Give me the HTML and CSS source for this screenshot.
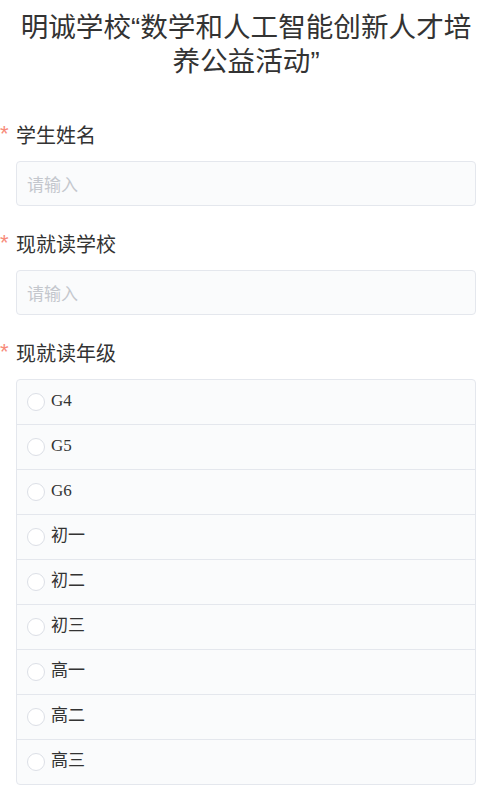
FILE: index.html
```html
<!DOCTYPE html>
<html lang="zh-CN">
<head>
<meta charset="utf-8">
<title>明诚学校</title>
<link rel="stylesheet" href="styles.css">
</head>
<body>
<div class="page">
  <h1 class="title">明诚学校“数学和人工智能创新人才培养公益活动”</h1>
  <form class="form">
    <div class="field">
      <label class="label"><span class="req">*</span>学生姓名</label>
      <input class="input" type="text" placeholder="请输入">
    </div>
    <div class="field">
      <label class="label"><span class="req">*</span>现就读学校</label>
      <input class="input" type="text" placeholder="请输入">
    </div>
    <div class="field">
      <label class="label"><span class="req">*</span>现就读年级</label>
      <div class="radio-group">
        <label class="option"><span class="circle"></span><span class="opt-text">G4</span></label>
        <label class="option"><span class="circle"></span><span class="opt-text">G5</span></label>
        <label class="option"><span class="circle"></span><span class="opt-text">G6</span></label>
        <label class="option"><span class="circle"></span><span class="opt-text">初一</span></label>
        <label class="option"><span class="circle"></span><span class="opt-text">初二</span></label>
        <label class="option"><span class="circle"></span><span class="opt-text">初三</span></label>
        <label class="option"><span class="circle"></span><span class="opt-text">高一</span></label>
        <label class="option"><span class="circle"></span><span class="opt-text">高二</span></label>
        <label class="option"><span class="circle"></span><span class="opt-text">高三</span></label>
      </div>
    </div>
  </form>
</div>
</body>
</html>
```
FILE: styles.css
```css
* { box-sizing: border-box; }
html, body {
  margin: 0;
  padding: 0;
  background: #fff;
}
body {
  font-family: "Noto Sans CJK SC", "Noto Sans", sans-serif;
  color: #333;
}
.page {
  padding: 11px 15px 0 16px;
}
.title {
  margin: 0;
  font-family: "Liberation Sans", "Noto Sans CJK SC", sans-serif;
  font-size: 27.6px;
  line-height: 34px;
  font-weight: 400;
  text-align: center;
  color: #333;
}
.form {
  margin-top: 42px;
}
.field {
  margin-bottom: 24px;
}
.label {
  display: block;
  position: relative;
  font-size: 20px;
  line-height: 28px;
  height: 28px;
  margin-bottom: 12px;
  color: #333;
}
.req {
  position: absolute;
  left: -16px;
  top: 2px;
  color: #f78b7b;
  font-size: 22px;
  line-height: 22px;
  font-family: "Liberation Sans", sans-serif;
}
.input {
  display: block;
  width: 100%;
  height: 45px;
  border: 1px solid #e4e7ed;
  border-radius: 4px;
  background: #fafbfc;
  padding: 0 10px;
  font-family: "Noto Sans CJK SC", sans-serif;
  font-size: 17px;
  color: #333;
  outline: none;
}
.input::placeholder {
  color: #c4c7cd;
}
.radio-group {
  border: 1px solid #e4e7ed;
  border-radius: 4px;
  background: #fafbfc;
  overflow: hidden;
}
.option {
  display: flex;
  align-items: center;
  height: 45px;
  padding-left: 10px;
  border-top: 1px solid #e4e7ed;
}
.option:first-child {
  border-top: none;
  height: 44px;
}
.circle {
  width: 18px;
  height: 18px;
  border-radius: 50%;
  border: 1px solid #dcdfe6;
  background: #fff;
  margin-right: 6px;
  flex: none;
}
.opt-text {
  font-family: "Liberation Serif", "Noto Sans CJK SC", serif;
  font-size: 17px;
  color: #333;
  line-height: 20px;
  position: relative;
  top: -1px;
}
```
